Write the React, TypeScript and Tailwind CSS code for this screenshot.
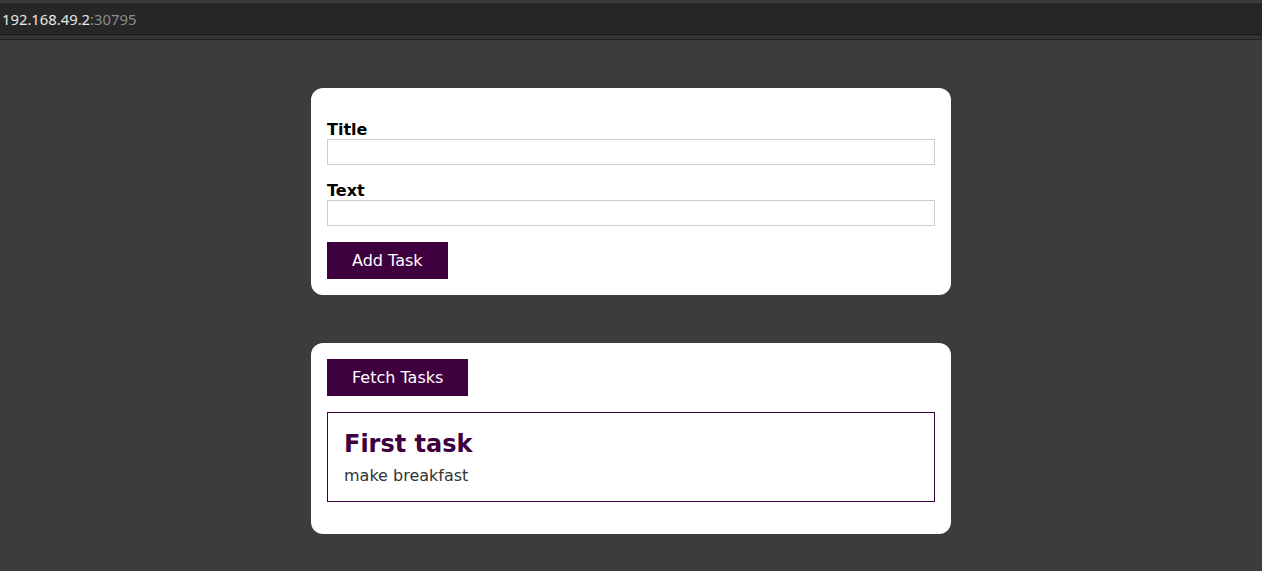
import React from 'react';

const font = { fontFamily: '"DejaVu Sans", Verdana, sans-serif' };

function Field({ label }: { label: string }) {
  return (
    <div className="flex flex-col">
      <label className="text-[16px] font-bold leading-[19px] text-black">{label}</label>
      <input type="text" className="h-[26px] w-full border border-[#cccccc] bg-white px-1 outline-none" />
    </div>
  );
}

export default function App() {
  return (
    <div className="min-h-[571px] w-full bg-[#3c3c3c]" style={font}>
      <div className="h-[3px] bg-[#3a3a3a]" />
      <div className="h-px bg-[#2a2a2a]" />
      <div className="flex h-[30px] items-center bg-[#262626] px-[2px] text-[14.8px] leading-none" style={{ fontFamily: '"Noto Sans", "Open Sans", sans-serif' }}>
        <span className="text-[#e8e8e8]">192.168.49.2</span>
        <span className="text-[#8c8c8c]">:30795</span>
      </div>
      <div className="h-px bg-[#1a1a1a]" />
      <div className="h-[4px] bg-[#333333]" />
      <div className="h-px bg-[#222222]" />

      <div className="flex flex-col items-center pt-[48px] pb-[37px]">
        <section className="w-[640px] rounded-xl bg-white px-4 pt-8 pb-4">
          <form className="flex flex-col gap-4" onSubmit={e => e.preventDefault()}>
            <Field label="Title" />
            <Field label="Text" />
            <div>
              <button type="submit" className="h-[37px] bg-[#3f003f] px-[25px] text-[16px] text-white">
                Add Task
              </button>
            </div>
          </form>
        </section>

        <section className="mt-[48px] w-[640px] rounded-xl bg-white px-4 pt-4 pb-8">
          <button type="button" className="h-[37px] bg-[#3f003f] px-[25px] text-[16px] text-white">
            Fetch Tasks
          </button>
          <div className="mt-4 border border-[#3f003f] px-4 pt-4 pb-4">
            <h2 className="pt-px text-[24px] font-bold leading-[28px] text-[#3f003f]">First task</h2>
            <p className="mt-[8px] text-[16px] leading-[19px] text-[#333333]">make breakfast</p>
          </div>
        </section>
      </div>
    </div>
  );
}
